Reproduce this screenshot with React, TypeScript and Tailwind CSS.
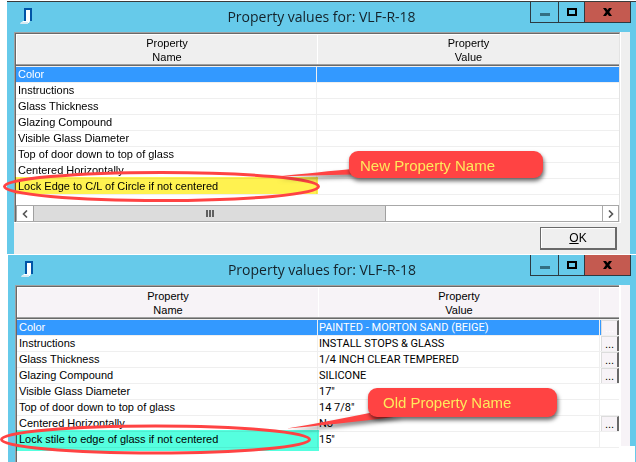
import React from "react";

type Row = { name: string; value?: string; more?: boolean };

const newRows: Row[] = [
  { name: "Color" },
  { name: "Instructions" },
  { name: "Glass Thickness" },
  { name: "Glazing Compound" },
  { name: "Visible Glass Diameter" },
  { name: "Top of door down to top of glass" },
  { name: "Centered Horizontally" },
  { name: "Lock Edge to C/L of Circle if not centered" },
];

const oldRows: Row[] = [
  { name: "Color", value: "PAINTED - MORTON SAND (BEIGE)", more: true },
  { name: "Instructions", value: "INSTALL STOPS & GLASS", more: true },
  { name: "Glass Thickness", value: "1/4 INCH CLEAR TEMPERED", more: true },
  { name: "Glazing Compound", value: "SILICONE", more: true },
  { name: "Visible Glass Diameter", value: '17"' },
  { name: "Top of door down to top of glass", value: '14 7/8"' },
  { name: "Centered Horizontally", value: "No", more: true },
  { name: "Lock stile to edge of glass if not centered", value: '15"' },
];

function DoorIcon() {
  return (
    <svg width="14" height="17" viewBox="0 0 14 17" aria-hidden="true">
      <path d="M4 13V0h8v13H9V2H6v11z" fill="#0054a6" />
      <path d="M6 2h4v11H6z" fill="#fff" />
      <path d="M10 2h2v11h-2z" fill="#0054a6" />
      <path d="M3 13h7l-1 2H1z" fill="#fff" />
      <path d="M1 14h7v2H0z" fill="#d6eaf2" />
    </svg>
  );
}

function TitleBar({ title }: { title: string }) {
  return (
    <header className="flex h-[30px] items-start bg-[#66caea] pr-[5px]">
      <div className="w-[106px] pt-[6px] pl-[13px]">
        <DoorIcon />
      </div>
      <h1 className="flex-1 text-center font-['Open_Sans',sans-serif] text-[14px] leading-[30px] text-[#14222a]">
        {title}
      </h1>
      <div className="flex h-[21px] border-x border-b border-[#2c3a42]">
        <button aria-label="Minimize" className="flex w-7 items-center justify-center border-r border-[#2c3a42]">
          <svg width="10" height="10" aria-hidden="true">
            <path d="M0 6h10v3H0z" fill="#336f82" />
          </svg>
        </button>
        <button aria-label="Maximize" className="flex w-[26px] items-center justify-center border-r border-[#2c3a42]">
          <svg width="10" height="8" aria-hidden="true">
            <path d="M1 1h8v6H1z" fill="none" stroke="#000" strokeWidth="2" />
          </svg>
        </button>
        <button aria-label="Close" className="flex w-[45px] items-center justify-center bg-[#c45a50]">
          <svg width="9" height="8" aria-hidden="true">
            <path d="M0 0h3l1.500 2L6 0h3L6.200 4 9 8H6L4.500 6 3 8H0l2.800-4z" fill="#000" />
          </svg>
        </button>
      </div>
    </header>
  );
}

function HeadCell({ children, tone }: { children?: React.ReactNode; tone: string }) {
  return (
    <th className="p-0 font-normal">
      <div className={`h-[30px] border-t border-l border-white pt-px leading-[14px] ${tone}`}>{children}</div>
      <div className="h-[3px] border-t border-b border-t-[#a0a0a0] border-b-[#f0f0f0] bg-[#696969]" />
    </th>
  );
}

function PropertyTable({ rows, withMore, tone }: { rows: Row[]; withMore?: boolean; tone: string }) {
  return (
    <table className="w-full table-fixed border-separate border-spacing-0 bg-white text-left text-[11px] leading-[15px] text-black">
      <colgroup>
        <col className="w-[301px]" />
        <col />
        {withMore && <col className="w-5" />}
      </colgroup>
      <thead className="text-center">
        <tr>
          <HeadCell tone={tone}>
            Property
            <br />
            Name
          </HeadCell>
          <HeadCell tone={tone}>
            Property
            <br />
            Value
          </HeadCell>
          {withMore && <HeadCell tone={tone} />}
        </tr>
      </thead>
      <tbody>
        {rows.map((r, i) => (
          <tr key={r.name} className={i === 0 ? "bg-[#3399ff] text-white" : ""}>
            <td className="h-4 overflow-hidden border-r border-b border-[#efefef] p-0 pl-[2px] whitespace-nowrap">
              {r.name}
            </td>
            <td className="h-4 overflow-hidden border-b border-[#efefef] p-0 pl-px font-[Roboto,sans-serif] whitespace-nowrap">
              {r.value}
            </td>
            {withMore && (
              <td className="h-4 border-b border-l border-[#efefef] p-0 pl-px">
                {r.more && (
                  <button
                    aria-label={`Edit ${r.name}`}
                    className={`block h-[15px] w-full border-t border-r-2 border-l border-t-[#dcdcdc] border-r-[#696969] border-l-[#dcdcdc] text-center leading-[14px] ${tone}`}
                  >
                    ...
                  </button>
                )}
              </td>
            )}
          </tr>
        ))}
      </tbody>
    </table>
  );
}

function ScrollBar() {
  return (
    <div className="flex h-[17px] border border-[#a8a8a8] bg-white">
      <button aria-label="Scroll left" className="flex w-4 items-center justify-center">
        <svg width="6" height="8" aria-hidden="true">
          <path d="M5 0.500L1.500 4L5 7.500" fill="none" stroke="#555" strokeWidth="1.600" />
        </svg>
      </button>
      <div className="flex w-[353px] items-center justify-center gap-px border-x border-[#a0a0a0] bg-[#dcdcdc]">
        <span className="h-[7px] w-[2px] bg-[#606060]" />
        <span className="h-[7px] w-[2px] bg-[#606060]" />
        <span className="h-[7px] w-[2px] bg-[#606060]" />
      </div>
      <div className="flex-1" />
      <button aria-label="Scroll right" className="flex w-4 items-center justify-center border-l border-[#a8a8a8]">
        <svg width="6" height="8" aria-hidden="true">
          <path d="M1 0.500L4.500 4L1 7.500" fill="none" stroke="#555" strokeWidth="1.600" />
        </svg>
      </button>
    </div>
  );
}

const frame = "border-t border-l border-[#a0a0a0]";
const innerFrame = "border-t border-l border-[#696969]";

export default function App() {
  return (
    <main className="bg-white font-['Liberation_Sans',Arial,sans-serif]">
      <section className="relative pt-px pl-[7px]">
        <div className="border-t border-[#3a3a3a]">
          <TitleBar title="Property values for: VLF-R-18" />
          <div className="border-r-[6px] border-l-[7px] border-[#66caea] bg-[#efefef]">
            <div className="mr-[9px] border-r border-b border-white">
              <div className={frame}>
                <div className={`${innerFrame} border-r border-r-[#e3e3e3] bg-white`}>
                  <PropertyTable rows={newRows} tone="bg-[#efefef]" />
                  <div className="pt-[10px]">
                    <ScrollBar />
                  </div>
                </div>
              </div>
            </div>
            <div className="flex justify-end pt-1 pr-[13px] pb-1">
              <button className="h-[23px] w-[77px] border border-r-2 border-b-2 border-[#696969] bg-[#efefef] text-[12px] leading-[18px] text-black shadow-[inset_1px_1px_0_#fff]">
                <span className="underline">O</span>K
              </button>
            </div>
          </div>
        </div>

        <div className="absolute top-[177px] left-[15px] h-[17px] w-[303px] bg-[#fff250] mix-blend-multiply" />
        <svg className="absolute top-[160px] left-0" width="360" height="46" aria-hidden="true">
          <ellipse cx="161.500" cy="26.500" rx="157" ry="14" fill="none" stroke="#ff4343" strokeWidth="3" />
          <path
            className="drop-shadow-[1px_3px_2px_rgba(0,0,0,0.5)]"
            d="M278 16.500Q300 14 352 9V14.500Q310 15.500 278 16.500Z"
            fill="#ff4343"
          />
        </svg>
        <div className="absolute top-[151px] left-[349px] h-[27px] w-[194px] rounded-[9px] bg-[#ff4343] pl-[11px] text-[15px] leading-[30px] text-[#ffe95c] shadow-[1px_3px_4px_rgba(0,0,0,0.6)]">
          New Property Name
        </div>
      </section>

      <section className="relative mt-px pl-2">
        <TitleBar title="Property values for: VLF-R-18" />
        <div className="flex items-start">
          <div className="w-[7px] self-stretch bg-[#66caea]" />
          <div className={`min-w-0 flex-1 ${frame}`}>
            <div className={`${innerFrame} pb-[14px]`}>
              <PropertyTable rows={oldRows} withMore tone="bg-[#f7f3f7]" />
            </div>
          </div>
          <div className="self-stretch border-r border-[#66caea]">
            <div className="h-[161px] w-[16px] border-r-[5px] border-l-2 border-r-[#66caea] border-l-white bg-[#f7f3f7]" />
          </div>
        </div>

        <div className="absolute top-[175px] left-4 h-[21px] w-[303px] bg-[#55ffdf] mix-blend-multiply" />
        <svg className="absolute top-[150px] left-0" width="410" height="54" aria-hidden="true">
          <ellipse cx="155.500" cy="34.500" rx="154" ry="13.500" fill="none" stroke="#ff4343" strokeWidth="3" />
          <path
            className="drop-shadow-[1px_3px_2px_rgba(0,0,0,0.5)]"
            d="M287 23.500Q320 18 372 7.500L402 11Q330 20 287 23.500Z"
            fill="#ff4343"
          />
        </svg>
        <div className="absolute top-[133px] left-[368px] h-[29px] w-[189px] rounded-[9px] bg-[#ff4343] pl-[15px] text-[15px] leading-[30px] text-[#ffe95c] shadow-[1px_3px_4px_rgba(0,0,0,0.6)]">
          Old Property Name
        </div>
      </section>
    </main>
  );
}
